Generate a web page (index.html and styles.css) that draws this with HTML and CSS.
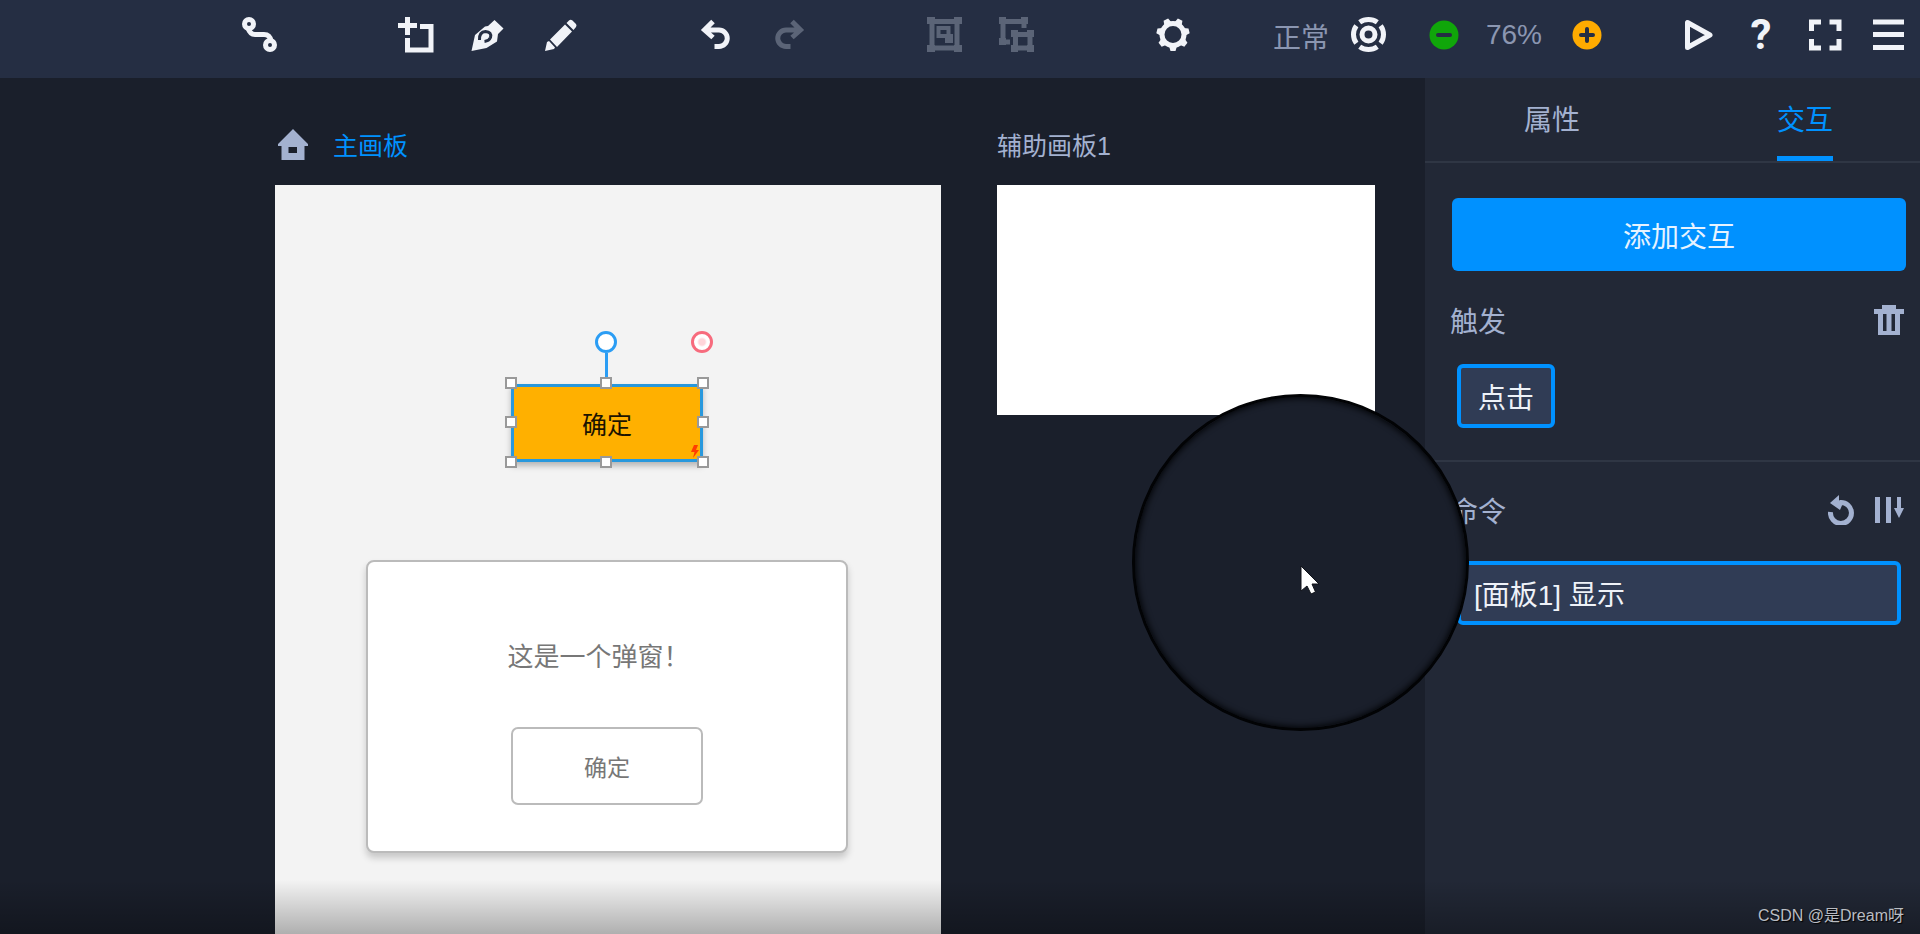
FILE: index.html
```
<!DOCTYPE html>
<html lang="zh-CN">
<head>
<meta charset="utf-8">
<title>原型编辑器</title>
<link rel="stylesheet" href="styles.css">
</head>
<body>
<div class="app">
  <header class="toolbar">
    <div class="tools">
      <div class="group">
        <button class="tool" aria-label="连线"><svg viewBox="0 0 36 36"><g class="line" stroke-width="5"><circle cx="7" cy="7" r="4.500"/><circle cx="28" cy="28" r="4.500"/><path d="M6 11Q8 17.500 13 17.500H22Q28 17.500 29 24"/></g></svg></button>
      </div>
      <div class="group">
        <button class="tool" aria-label="添加画板"><svg viewBox="0 0 36 36"><path class="line" stroke-width="5" d="M9.500 0V18M0 8.500H19M22 9.500H33V33H9.500V21"/></svg></button>
        <button class="tool" aria-label="钢笔"><svg viewBox="0 0 36 36"><path class="solid" d="M1.500 34L5 18L15 9.500L18 9L24.500 3L33.500 11.500L28 17L27 24.500L16.500 31Z"/><path class="cut" d="M9.500 23Q9 15 15.500 14.500Q22 15 20.500 20.500Q19 24 14.500 24.500"/></svg></button>
        <button class="tool" aria-label="铅笔"><svg viewBox="0 0 36 36"><path class="solid" d="M3 34L5 25L7 24L13 30.500L12 32ZM8 22.500L23 7.500L30 14.500L15 30ZM24.500 6L27 3.500Q28.500 2 30.500 3.500L34 7Q35 8.500 34 10L31.500 13Z"/></svg></button>
      </div>
      <div class="group">
        <button class="tool" aria-label="撤销"><svg viewBox="0 0 36 36"><path class="line" stroke-width="5" d="M6 13H21A8.250 8.250 0 0 1 21 29.500H16.500M15 4.500L6.500 13L15 20.500"/></svg></button>
        <button class="tool off" aria-label="重做" disabled><svg viewBox="0 0 36 36"><path class="line" stroke-width="5" d="M31 13H16A8.250 8.250 0 0 0 16 29.500H20.500M22 4.500L30.500 13L22 20.500"/></svg></button>
      </div>
      <div class="group">
        <button class="tool off" aria-label="组合" disabled><svg viewBox="0 0 36 36"><path class="solid" d="M1 0h8v7h-8zM28 0h8v7h-8zM1 28h8v7h-8zM28 28h8v7h-8z"/><path class="line" stroke-width="5" d="M6 4.500H31V31H6Z"/><path class="line" stroke-width="4" d="M12.500 11H22.500V19H12.500Z"/><path class="solid" d="M21 17h6v9h-8v-5h2z"/></svg></button>
        <button class="tool off" aria-label="取消组合" disabled><svg viewBox="0 0 36 36"><path class="solid" d="M1 0h7v7h-7zM23 0h7v7h-7zM1 21h7v7h-7zM13 13h7v7h-7zM29 13h7v7h-7zM13 28h7v7h-7zM29 28h7v7h-7z"/><path class="line" stroke-width="5" d="M26 11V4.500H5V25H12M17.500 17.500H32V31H17.500Z"/></svg></button>
      </div>
      <div class="group">
        <button class="tool" aria-label="设置"><svg viewBox="0 0 36 36"><circle class="line" stroke-width="5" cx="19" cy="17.500" r="11"/><g class="solid"><path id="tooth" d="M15 29L16.500 34H21.500L23 29Z"/><use href="#tooth" transform="rotate(51.430 19 17.500)"/><use href="#tooth" transform="rotate(102.860 19 17.500)"/><use href="#tooth" transform="rotate(154.290 19 17.500)"/><use href="#tooth" transform="rotate(205.710 19 17.500)"/><use href="#tooth" transform="rotate(257.140 19 17.500)"/><use href="#tooth" transform="rotate(308.570 19 17.500)"/></g></svg></button>
      </div>
    </div>
    <div class="status">
      <div class="mode">
        <span class="mode-name">正常</span>
        <button class="tool" aria-label="定位"><svg viewBox="0 0 36 36"><circle class="line" stroke-width="5" cx="17.500" cy="17.500" r="15" pathLength="40" stroke-dasharray="8 2" stroke-dashoffset="4"/><circle class="line" stroke-width="5" cx="17.500" cy="17.500" r="6.500"/></svg></button>
      </div>
      <div class="scale">
        <button class="tool" aria-label="缩小"><svg viewBox="0 0 36 36"><circle cx="18" cy="18" r="14.500" fill="#10a60a"/><path class="sign" d="M12 18H24"/></svg></button>
        <span class="scale-value">76%</span>
        <button class="tool" aria-label="放大"><svg viewBox="0 0 36 36"><circle cx="18" cy="18" r="14.500" fill="#ffab00"/><path class="sign" d="M12 18H24M18 12V24"/></svg></button>
      </div>
      <div class="actions">
        <button class="tool" aria-label="预览"><svg viewBox="0 0 36 36"><path class="line" stroke-width="5" stroke-linejoin="round" d="M8.500 5.500V30.500L31 18Z"/></svg></button>
        <button class="tool help" aria-label="帮助">?</button>
        <button class="tool" aria-label="全屏"><svg viewBox="0 0 36 36"><path class="line" stroke-width="5" d="M4.500 14V5H14M22.500 5H32V14M32 22V31H22.500M14 31H4.500V22"/></svg></button>
        <button class="tool" aria-label="菜单"><svg viewBox="0 0 36 36"><path class="line" stroke-width="5" d="M2 5H33M2 17.500H33M2 30.500H33"/></svg></button>
      </div>
    </div>
  </header>

  <main class="stage">
    <section class="board-column">
      <h2 class="board-title current"><svg class="home" viewBox="0 0 30 31"><path fill="#a3b1d0" fill-rule="evenodd" d="M15 0L30 15V17H26.500V31H3.500V17H0V15ZM10.500 18V24H19V18Z"/></svg>主画板</h2>
      <div class="board main-board">
        <div class="shape">确定
          <svg class="bolt" viewBox="0 0 8 13"><path fill="#ff3d00" d="M3 0H7L5 5H8L2 13L3.500 7H0Z"/></svg>
          <span class="stem"></span><span class="rotate"></span><span class="anchor"></span>
          <i class="grip top left"></i><i class="grip top center"></i><i class="grip top right"></i>
          <i class="grip middle left"></i><i class="grip middle right"></i>
          <i class="grip bottom left"></i><i class="grip bottom center"></i><i class="grip bottom right"></i>
        </div>
        <div class="dialog">
          <p class="dialog-text">这是一个弹窗！</p>
          <button class="dialog-ok">确定</button>
        </div>
      </div>
    </section>
    <section class="board-column">
      <h2 class="board-title">辅助画板1</h2>
      <div class="board side-board"></div>
    </section>
  </main>

  <aside class="panel">
    <nav class="tabs">
      <button class="tab">属性</button>
      <button class="tab active">交互</button>
    </nav>
    <section class="section trigger">
      <button class="add">添加交互</button>
      <div class="section-head">
        <h3>触发</h3>
        <button class="small" aria-label="删除"><svg width="30" height="30" viewBox="0 0 30 30"><path fill="#a3b1d0" fill-rule="evenodd" d="M8 0H22V4H30V9H26V30H4V9H0V4H8ZM9 9V26H12.500V9ZM17.500 9V26H21V9Z"/></svg></button>
      </div>
      <button class="chip">点击</button>
    </section>
    <section class="section command">
      <div class="section-head">
        <h3>命令</h3>
        <div class="head-actions">
          <button class="small" aria-label="重置"><svg width="26" height="30" viewBox="0 0 26 30"><path d="M2.500 17A10.500 10.500 0 1 0 12 7.500" fill="none" stroke="#a3b1d0" stroke-width="5"/><path fill="#a3b1d0" d="M2 8L11 0V5L15 8L12 15Z"/></svg></button>
          <button class="small" aria-label="排序"><svg width="30" height="30" viewBox="0 0 30 30"><path fill="#a3b1d0" d="M1 2H6V28H1ZM12 2H17V28H12ZM23 2H27V13H30L25 23L20 13H23Z"/></svg></button>
        </div>
      </div>
      <button class="chip wide">[面板1] 显示</button>
    </section>
  </aside>

  <div class="lens"><svg class="pointer" viewBox="0 0 20 30"><path fill="#fff" stroke="#10131a" d="M1 1V26L7 21L11 29L15.500 27L12 19H19Z"/></svg></div>
  <div class="shade"></div>
  <p class="watermark">CSDN @是Dream呀</p>
</div>
</body>
</html>
```
FILE: styles.css
```
* { box-sizing: border-box; }

body {
  margin: 0;
  background: #1a1f2b;
  color: #a3b1d0;
  font-family: "Liberation Sans", "Noto Sans CJK SC", sans-serif;
  font-size: 28px;
}

button {
  padding: 0;
  border: 0;
  background: none;
  color: inherit;
  font: inherit;
}

svg { display: block; }
h2, h3, p { margin: 0; font-weight: 400; }

.app {
  position: relative;
  display: grid;
  grid-template-columns: minmax(0, 1fr) 495px;
  grid-template-rows: auto 1fr;
  min-height: 100vh;
  overflow: hidden;
}

/* Toolbar */
.toolbar {
  grid-column: 1 / -1;
  display: flex;
  justify-content: space-between;
  align-items: center;
  min-height: 78px;
  padding: 0 13px 8px 242px;
  background: #252e43;
}
.tools { display: flex; gap: 120px; }
.group { display: flex; gap: 36px; }
.status, .mode, .scale, .actions { display: flex; align-items: center; }
.mode { gap: 22px; margin-right: 39px; }
.scale { gap: 24px; margin-right: 74px; }
.actions { gap: 28px; }
.mode-name { padding-top: 8px; line-height: 36px; }
.scale-value { padding-right: 3px; line-height: 36px; }
.mode-name, .scale-value { color: #8b96b1; }
.tool { width: 36px; height: 36px; color: #f1f3f8; }
.tool svg { width: 36px; height: 36px; overflow: visible; }
.off { color: #5b6477; }
.line { fill: none; stroke: currentColor; }
.solid { fill: currentColor; }
.cut { fill: none; stroke: #252e43; stroke-width: 3px; }
.sign { fill: none; stroke: #252e43; stroke-width: 4px; stroke-linecap: round; }
.help { font-family: Roboto, sans-serif; font-size: 42px; font-weight: 700; line-height: 36px; }

/* Canvas */
.stage {
  display: flex;
  gap: 56px;
  padding: 47px 0 0 275px;
}
.board-column { display: flex; flex-direction: column; }
.board-title {
  display: flex;
  align-items: center;
  gap: 25px;
  height: 60px;
  padding-bottom: 22px;
  font-size: 25px;
}
.current { padding-left: 3px; color: #0091ff; }
.home { width: 30px; height: 31px; }
.main-board { position: relative; flex: 1; width: 666px; min-height: 749px; background: #f3f3f3; }
.side-board { width: 378px; height: 230px; background: #fff; }

.shape {
  position: absolute;
  left: 236px;
  top: 199px;
  display: grid;
  place-items: center;
  width: 192px;
  height: 78px;
  border: 3px solid #2898dd;
  background: #ffb000;
  box-shadow: 0 4px 6px rgba(0, 0, 0, .25);
  color: #1c1400;
  font-size: 25px;
}
.bolt { position: absolute; right: 1px; bottom: 1px; width: 8px; height: 13px; }
.stem { position: absolute; left: 91px; top: -34px; width: 3px; height: 32px; background: #2b9df4; }
.rotate, .anchor {
  position: absolute;
  top: -56px;
  width: 22px;
  height: 22px;
  border: 3px solid #2b9df4;
  border-radius: 50%;
  background: #fff;
}
.rotate { left: 81px; }
.anchor {
  right: -13px;
  border-color: #f76b7d;
  background: radial-gradient(circle, #ffd5da 0 3px, #fff 5px);
}
.grip { position: absolute; width: 12px; height: 12px; border: 2px solid #999; background: #fff; }
.grip.left { left: -9px; }
.grip.center { left: 86px; }
.grip.right { right: -9px; }
.grip.top { top: -10px; }
.grip.middle { top: 29px; }
.grip.bottom { bottom: -9px; }

.dialog {
  position: absolute;
  left: 91px;
  top: 375px;
  display: flex;
  flex-direction: column;
  align-items: center;
  width: 482px;
  height: 293px;
  padding-top: 77px;
  border: 2px solid #bbb;
  border-radius: 8px;
  background: #fff;
  box-shadow: 0 5px 7px rgba(0, 0, 0, .18);
  color: #777;
}
.dialog-text { height: 88px; padding-right: 17px; font-size: 26px; line-height: 36px; }
.dialog-ok { width: 192px; height: 78px; border: 2px solid #bbb; border-radius: 7px; font-size: 23px; }

/* Side panel */
.panel { background: #222836; }
.tabs {
  display: flex;
  justify-content: space-between;
  height: 85px;
  padding: 0 87px 0 99px;
  border-bottom: 2px solid #2f3644;
}
.tab { padding-top: 8px; border-bottom: 5px solid transparent; line-height: 36px; }
.active { border-bottom-color: #0091ff; color: #0091ff; }
.section { padding: 0 14px 0 27px; }
.trigger { padding-top: 35px; padding-bottom: 32px; border-bottom: 2px solid #2f3644; }
.command { padding-top: 28px; }
.add {
  width: 100%;
  height: 73px;
  border-radius: 6px;
  background: #0091ff;
  color: #e6f3ff;
}
.section-head {
  display: flex;
  justify-content: space-between;
  align-items: center;
  height: 40px;
  padding-right: 2px;
}
.trigger .section-head { margin: 29px 0 24px; }
.command .section-head { margin-bottom: 31px; }
.section-head h3 { margin-left: -2px; padding-top: 5px; font-size: 28px; line-height: 40px; }
.head-actions { display: flex; gap: 20px; }
.chip {
  height: 64px;
  margin-left: 5px;
  padding: 0 17px;
  border: 4px solid #0091ff;
  border-radius: 6px;
  background: #303c55;
  color: #eef2f8;
}
.wide { display: block; width: calc(100% - 10px); padding: 0 13px; text-align: left; }

/* Pointer spotlight lies over both the canvas and the panel */
.lens {
  position: absolute;
  right: 451px;
  top: 394px;
  width: 337px;
  height: 337px;
  border: 3px solid #020305;
  border-radius: 50%;
  background: #1a1f2b;
  box-shadow: inset 0 0 6px 1px #020305;
}
.pointer { position: absolute; left: 165px; top: 168px; width: 20px; height: 30px; }

.shade {
  position: absolute;
  right: 0;
  bottom: 0;
  left: 0;
  height: 54px;
  background: linear-gradient(rgba(0, 0, 0, 0), rgba(0, 0, 0, .28));
}
.watermark {
  position: absolute;
  right: 16px;
  bottom: 7px;
  color: #b9bcc2;
  font-size: 16px;
  line-height: 22px;
  text-shadow: 1px 1px 1px #000;
}
```
